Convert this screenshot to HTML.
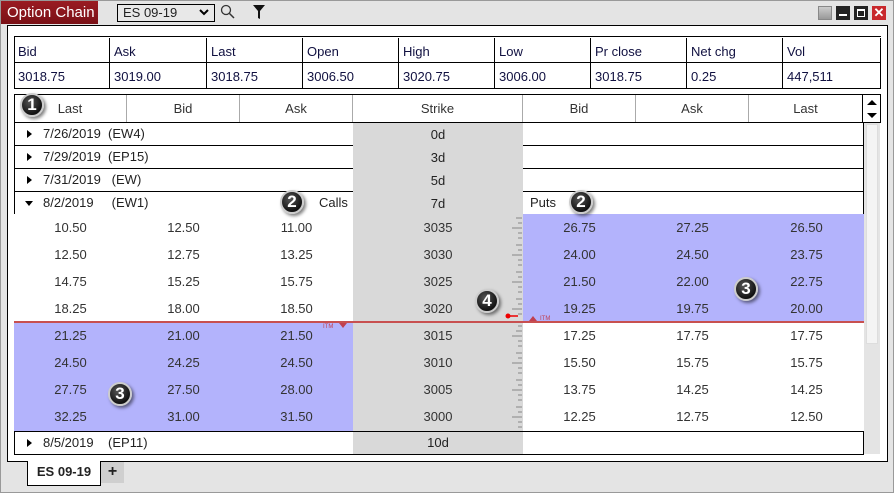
<!DOCTYPE html>
<html><head><style>
*{margin:0;padding:0;box-sizing:border-box}
body{width:894px;height:493px;background:#e4e4e4;font-family:"Liberation Sans",Arial,sans-serif;font-size:13px;color:#222;position:relative;overflow:hidden}
.a{position:absolute}
.c{position:absolute;text-align:center;line-height:28px;height:27px;font-size:13px;color:#333}
.b{position:absolute;width:24px;height:24px;border-radius:50%;background:radial-gradient(circle at 40% 35%,#555,#111 70%);border:2px solid #ccc;box-shadow:2px 2px 3px rgba(0,0,0,.5);color:#fff;font-weight:bold;font-size:17px;text-align:center;line-height:20px}
.q{position:absolute;border-right:1px solid #000;padding-left:4px;line-height:28px;height:26px;color:#101040}
.er{position:absolute;left:14px;width:850px;height:23px;border:1px solid #000;border-top:none;background:#fff;line-height:22px}
.tri{position:absolute;left:12px;top:7px;width:0;height:0;border-top:4px solid transparent;border-bottom:4px solid transparent;border-left:5px solid #000}
</style></head><body>
<div class="a" style="left:0;top:0;width:894px;height:493px;border:1px solid #999"></div>
<div class="a" style="left:1px;top:1px;width:97px;height:23px;background:linear-gradient(#9a1c22,#7a1016);color:#fff;font-size:15px;line-height:23px;padding-left:6px">Option Chain</div>
<div class="a" style="left:117px;top:4px;width:98px;height:18px;border:1px solid #000;background:#e8e8e8;font-size:13px;line-height:16px;padding-left:5px">ES 09-19</div>
<svg class="a" style="left:199px;top:9px" width="10" height="8"><path d="M1 1L5 5L9 1" fill="none" stroke="#000" stroke-width="2"/></svg>
<svg class="a" style="left:220px;top:4px" width="16" height="16"><circle cx="6" cy="6" r="4.5" fill="none" stroke="#333" stroke-width="1.3"/><line x1="9.5" y1="9.5" x2="14" y2="14" stroke="#333" stroke-width="1.5"/></svg>
<svg class="a" style="left:252px;top:4px" width="14" height="16"><path d="M1 1H13L8 7V15L6 14V7Z" fill="#111"/></svg>
<div class="a" style="left:818px;top:6px;width:14px;height:14px;background:linear-gradient(#ccc,#999);border:1px solid #888"></div>
<div class="a" style="left:836px;top:6px;width:14px;height:14px;background:#222"><div class="a" style="left:3px;top:8px;width:8px;height:2px;background:#fff"></div></div>
<div class="a" style="left:854px;top:6px;width:14px;height:14px;background:#222"><div class="a" style="left:3px;top:3px;width:8px;height:8px;border:1px solid #fff;border-top-width:2px"></div></div>
<div class="a" style="left:872px;top:6px;width:14px;height:14px;background:#c8282c;color:#fff;font-weight:bold;font-size:13px;line-height:14px;text-align:center">✕</div>

<div class="a" style="left:7px;top:25px;width:881px;height:437px;background:#fff;border:1px solid #000"></div>

<div class="a" style="left:14px;top:36px;width:867px;height:53px;border:1px solid #000;border-right:none"></div>
<div class="a" style="left:14px;top:62px;width:867px;height:1px;background:#000"></div>
<div class="q" style="left:14px;top:38px;width:96px">Bid</div><div class="q" style="left:14px;top:63px;width:96px">3018.75</div>
<div class="q" style="left:110px;top:38px;width:97px">Ask</div><div class="q" style="left:110px;top:63px;width:97px">3019.00</div>
<div class="q" style="left:207px;top:38px;width:96px">Last</div><div class="q" style="left:207px;top:63px;width:96px">3018.75</div>
<div class="q" style="left:303px;top:38px;width:96px">Open</div><div class="q" style="left:303px;top:63px;width:96px">3006.50</div>
<div class="q" style="left:399px;top:38px;width:96px">High</div><div class="q" style="left:399px;top:63px;width:96px">3020.75</div>
<div class="q" style="left:495px;top:38px;width:96px">Low</div><div class="q" style="left:495px;top:63px;width:96px">3006.00</div>
<div class="q" style="left:591px;top:38px;width:96px">Pr close</div><div class="q" style="left:591px;top:63px;width:96px">3018.75</div>
<div class="q" style="left:687px;top:38px;width:96px">Net chg</div><div class="q" style="left:687px;top:63px;width:96px">0.25</div>
<div class="q" style="left:783px;top:38px;width:98px">Vol</div><div class="q" style="left:783px;top:63px;width:98px">447,511</div>

<div class="a" style="left:864px;top:122px;width:16px;height:332px;background:#e4e4e4"></div>
<div class="a" style="left:866px;top:124px;width:12px;height:220px;background:#f4f4f4;border:1px solid #ddd"></div>

<div class="a" style="left:14px;top:94px;width:867px;height:29px;border:1px solid #000;background:#fff"></div>
<div class="c" style="left:14px;top:95px;width:113px;border-right:1px solid #aaa">Last</div>
<div class="c" style="left:127px;top:95px;width:113px;border-right:1px solid #aaa">Bid</div>
<div class="c" style="left:240px;top:95px;width:113px;border-right:1px solid #aaa">Ask</div>
<div class="c" style="left:353px;top:95px;width:170px;border-right:1px solid #aaa">Strike</div>
<div class="c" style="left:523px;top:95px;width:113px;border-right:1px solid #aaa">Bid</div>
<div class="c" style="left:636px;top:95px;width:113px;border-right:1px solid #aaa">Ask</div>
<div class="c" style="left:749px;top:95px;width:114px;border-right:1px solid #000">Last</div>
<svg class="a" style="left:865px;top:98px" width="14" height="22"><path d="M2 7L7 2L12 7Z M2 15L7 20L12 15Z" fill="#000"/></svg>

<div class="er" style="top:123px"><div class="tri"></div><span class="a" style="left:28px">7/26/2019&nbsp; (EW4)</span></div>
<div class="er" style="top:146px"><div class="tri"></div><span class="a" style="left:28px">7/29/2019&nbsp; (EP15)</span></div>
<div class="er" style="top:169px"><div class="tri"></div><span class="a" style="left:28px">7/31/2019&nbsp;&nbsp; (EW)</span></div>
<div class="er" style="top:192px"><div class="a" style="left:10px;top:9px;border-left:4px solid transparent;border-right:4px solid transparent;border-top:5px solid #000"></div><span class="a" style="left:28px">8/2/2019&nbsp;&nbsp;&nbsp;&nbsp; (EW1)</span><span class="a" style="left:304px">Calls</span><span class="a" style="left:515px">Puts</span></div>
<div class="a" style="left:14px;top:214px;width:850px;height:217px;background:#fff"></div>
<div class="er" style="top:431px;border-top:1px solid #000;height:24px"><div class="tri"></div><span class="a" style="left:28px">8/5/2019&nbsp;&nbsp;&nbsp; (EP11)</span></div>

<div class="a" style="left:353px;top:123px;width:170px;height:92px;background:#d9d9d9"></div>
<div class="a" style="left:353px;top:214px;width:170px;height:217px;background:#d9d9d9"></div>
<div class="a" style="left:353px;top:432px;width:170px;height:22px;background:#d9d9d9"></div>
<div class="a" style="left:353px;top:123px;width:170px;line-height:23px;text-align:center">0d</div>
<div class="a" style="left:353px;top:146px;width:170px;line-height:23px;text-align:center">3d</div>
<div class="a" style="left:353px;top:169px;width:170px;line-height:23px;text-align:center">5d</div>
<div class="a" style="left:353px;top:192px;width:170px;line-height:23px;text-align:center">7d</div>
<div class="a" style="left:353px;top:431px;width:170px;line-height:23px;text-align:center">10d</div>

<div class="a" style="left:523px;top:214px;width:341px;height:108px;background:#b3b3fc"></div>
<div class="a" style="left:14px;top:322px;width:339px;height:109px;background:#b3b3fc"></div>

<svg class="a" style="left:500px;top:214px" width="23" height="217">
<g stroke="#888" stroke-width="1">
<line x1="16" y1="4" x2="22" y2="4"/><line x1="18" y1="9" x2="22" y2="9"/><line x1="12" y1="14" x2="22" y2="14"/><line x1="18" y1="19" x2="22" y2="19"/><line x1="18" y1="24" x2="22" y2="24"/>
<line x1="16" y1="31" x2="22" y2="31"/><line x1="18" y1="36" x2="22" y2="36"/><line x1="12" y1="41" x2="22" y2="41"/><line x1="18" y1="46" x2="22" y2="46"/><line x1="18" y1="51" x2="22" y2="51"/>
<line x1="16" y1="58" x2="22" y2="58"/><line x1="18" y1="63" x2="22" y2="63"/><line x1="12" y1="68" x2="22" y2="68"/><line x1="18" y1="73" x2="22" y2="73"/><line x1="18" y1="78" x2="22" y2="78"/>
<line x1="16" y1="85" x2="22" y2="85"/><line x1="18" y1="90" x2="22" y2="90"/><line x1="12" y1="95" x2="22" y2="95"/><line x1="18" y1="100" x2="22" y2="100"/><line x1="18" y1="112" x2="22" y2="112"/>
<line x1="16" y1="117" x2="22" y2="117"/><line x1="12" y1="122" x2="22" y2="122"/><line x1="18" y1="127" x2="22" y2="127"/><line x1="18" y1="132" x2="22" y2="132"/><line x1="16" y1="139" x2="22" y2="139"/>
<line x1="18" y1="144" x2="22" y2="144"/><line x1="12" y1="149" x2="22" y2="149"/><line x1="18" y1="154" x2="22" y2="154"/><line x1="18" y1="159" x2="22" y2="159"/><line x1="16" y1="166" x2="22" y2="166"/>
<line x1="18" y1="171" x2="22" y2="171"/><line x1="12" y1="176" x2="22" y2="176"/><line x1="18" y1="181" x2="22" y2="181"/><line x1="18" y1="186" x2="22" y2="186"/><line x1="16" y1="193" x2="22" y2="193"/>
<line x1="18" y1="198" x2="22" y2="198"/><line x1="12" y1="203" x2="22" y2="203"/><line x1="18" y1="208" x2="22" y2="208"/><line x1="18" y1="213" x2="22" y2="213"/>
</g>
<circle cx="8" cy="102" r="2.5" fill="#e00"/><line x1="8" y1="102" x2="18" y2="102" stroke="#e00" stroke-width="1.5"/>
</svg>

<div class="a" style="left:14px;top:321px;width:850px;height:2px;background:#c85050"></div>
<div class="a" style="left:339px;top:323px;border-left:4px solid transparent;border-right:4px solid transparent;border-top:5px solid #c04050"></div>
<div class="a" style="left:323px;top:323px;font-size:6px;color:#c04050;line-height:8px">ITM</div>
<div class="a" style="left:529px;top:316px;border-left:4px solid transparent;border-right:4px solid transparent;border-bottom:5px solid #c04050"></div>
<div class="a" style="left:540px;top:315px;font-size:6px;color:#c04050;line-height:8px">ITM</div>

<div class="c" style="left:14px;top:214px;width:113px">10.50</div><div class="c" style="left:127px;top:214px;width:113px">12.50</div><div class="c" style="left:240px;top:214px;width:113px">11.00</div><div class="c" style="left:353px;top:214px;width:170px">3035</div><div class="c" style="left:523px;top:214px;width:113px">26.75</div><div class="c" style="left:636px;top:214px;width:113px">27.25</div><div class="c" style="left:749px;top:214px;width:115px">26.50</div>
<div class="c" style="left:14px;top:241px;width:113px">12.50</div><div class="c" style="left:127px;top:241px;width:113px">12.75</div><div class="c" style="left:240px;top:241px;width:113px">13.25</div><div class="c" style="left:353px;top:241px;width:170px">3030</div><div class="c" style="left:523px;top:241px;width:113px">24.00</div><div class="c" style="left:636px;top:241px;width:113px">24.50</div><div class="c" style="left:749px;top:241px;width:115px">23.75</div>
<div class="c" style="left:14px;top:268px;width:113px">14.75</div><div class="c" style="left:127px;top:268px;width:113px">15.25</div><div class="c" style="left:240px;top:268px;width:113px">15.75</div><div class="c" style="left:353px;top:268px;width:170px">3025</div><div class="c" style="left:523px;top:268px;width:113px">21.50</div><div class="c" style="left:636px;top:268px;width:113px">22.00</div><div class="c" style="left:749px;top:268px;width:115px">22.75</div>
<div class="c" style="left:14px;top:295px;width:113px">18.25</div><div class="c" style="left:127px;top:295px;width:113px">18.00</div><div class="c" style="left:240px;top:295px;width:113px">18.50</div><div class="c" style="left:353px;top:295px;width:170px">3020</div><div class="c" style="left:523px;top:295px;width:113px">19.25</div><div class="c" style="left:636px;top:295px;width:113px">19.75</div><div class="c" style="left:749px;top:295px;width:115px">20.00</div>
<div class="c" style="left:14px;top:322px;width:113px">21.25</div><div class="c" style="left:127px;top:322px;width:113px">21.00</div><div class="c" style="left:240px;top:322px;width:113px">21.50</div><div class="c" style="left:353px;top:322px;width:170px">3015</div><div class="c" style="left:523px;top:322px;width:113px">17.25</div><div class="c" style="left:636px;top:322px;width:113px">17.75</div><div class="c" style="left:749px;top:322px;width:115px">17.75</div>
<div class="c" style="left:14px;top:349px;width:113px">24.50</div><div class="c" style="left:127px;top:349px;width:113px">24.25</div><div class="c" style="left:240px;top:349px;width:113px">24.50</div><div class="c" style="left:353px;top:349px;width:170px">3010</div><div class="c" style="left:523px;top:349px;width:113px">15.50</div><div class="c" style="left:636px;top:349px;width:113px">15.75</div><div class="c" style="left:749px;top:349px;width:115px">15.75</div>
<div class="c" style="left:14px;top:376px;width:113px">27.75</div><div class="c" style="left:127px;top:376px;width:113px">27.50</div><div class="c" style="left:240px;top:376px;width:113px">28.00</div><div class="c" style="left:353px;top:376px;width:170px">3005</div><div class="c" style="left:523px;top:376px;width:113px">13.75</div><div class="c" style="left:636px;top:376px;width:113px">14.25</div><div class="c" style="left:749px;top:376px;width:115px">14.25</div>
<div class="c" style="left:14px;top:403px;width:113px">32.25</div><div class="c" style="left:127px;top:403px;width:113px">31.00</div><div class="c" style="left:240px;top:403px;width:113px">31.50</div><div class="c" style="left:353px;top:403px;width:170px">3000</div><div class="c" style="left:523px;top:403px;width:113px">12.25</div><div class="c" style="left:636px;top:403px;width:113px">12.75</div><div class="c" style="left:749px;top:403px;width:115px">12.50</div>

<div class="b" style="left:20px;top:93px">1</div>
<div class="b" style="left:280px;top:190px">2</div>
<div class="b" style="left:569px;top:190px">2</div>
<div class="b" style="left:734px;top:277px">3</div>
<div class="b" style="left:108px;top:382px">3</div>
<div class="b" style="left:475px;top:289px">4</div>

<div class="a" style="left:27px;top:461px;width:74px;height:25px;background:#fff;border:1px solid #000;border-top:none;font-weight:bold;font-size:13px;line-height:22px;text-align:center">ES 09-19</div>
<div class="a" style="left:101px;top:462px;width:23px;height:21px;background:#cfcfcf;font-weight:bold;font-size:16px;line-height:20px;text-align:center">+</div>
</body></html>
